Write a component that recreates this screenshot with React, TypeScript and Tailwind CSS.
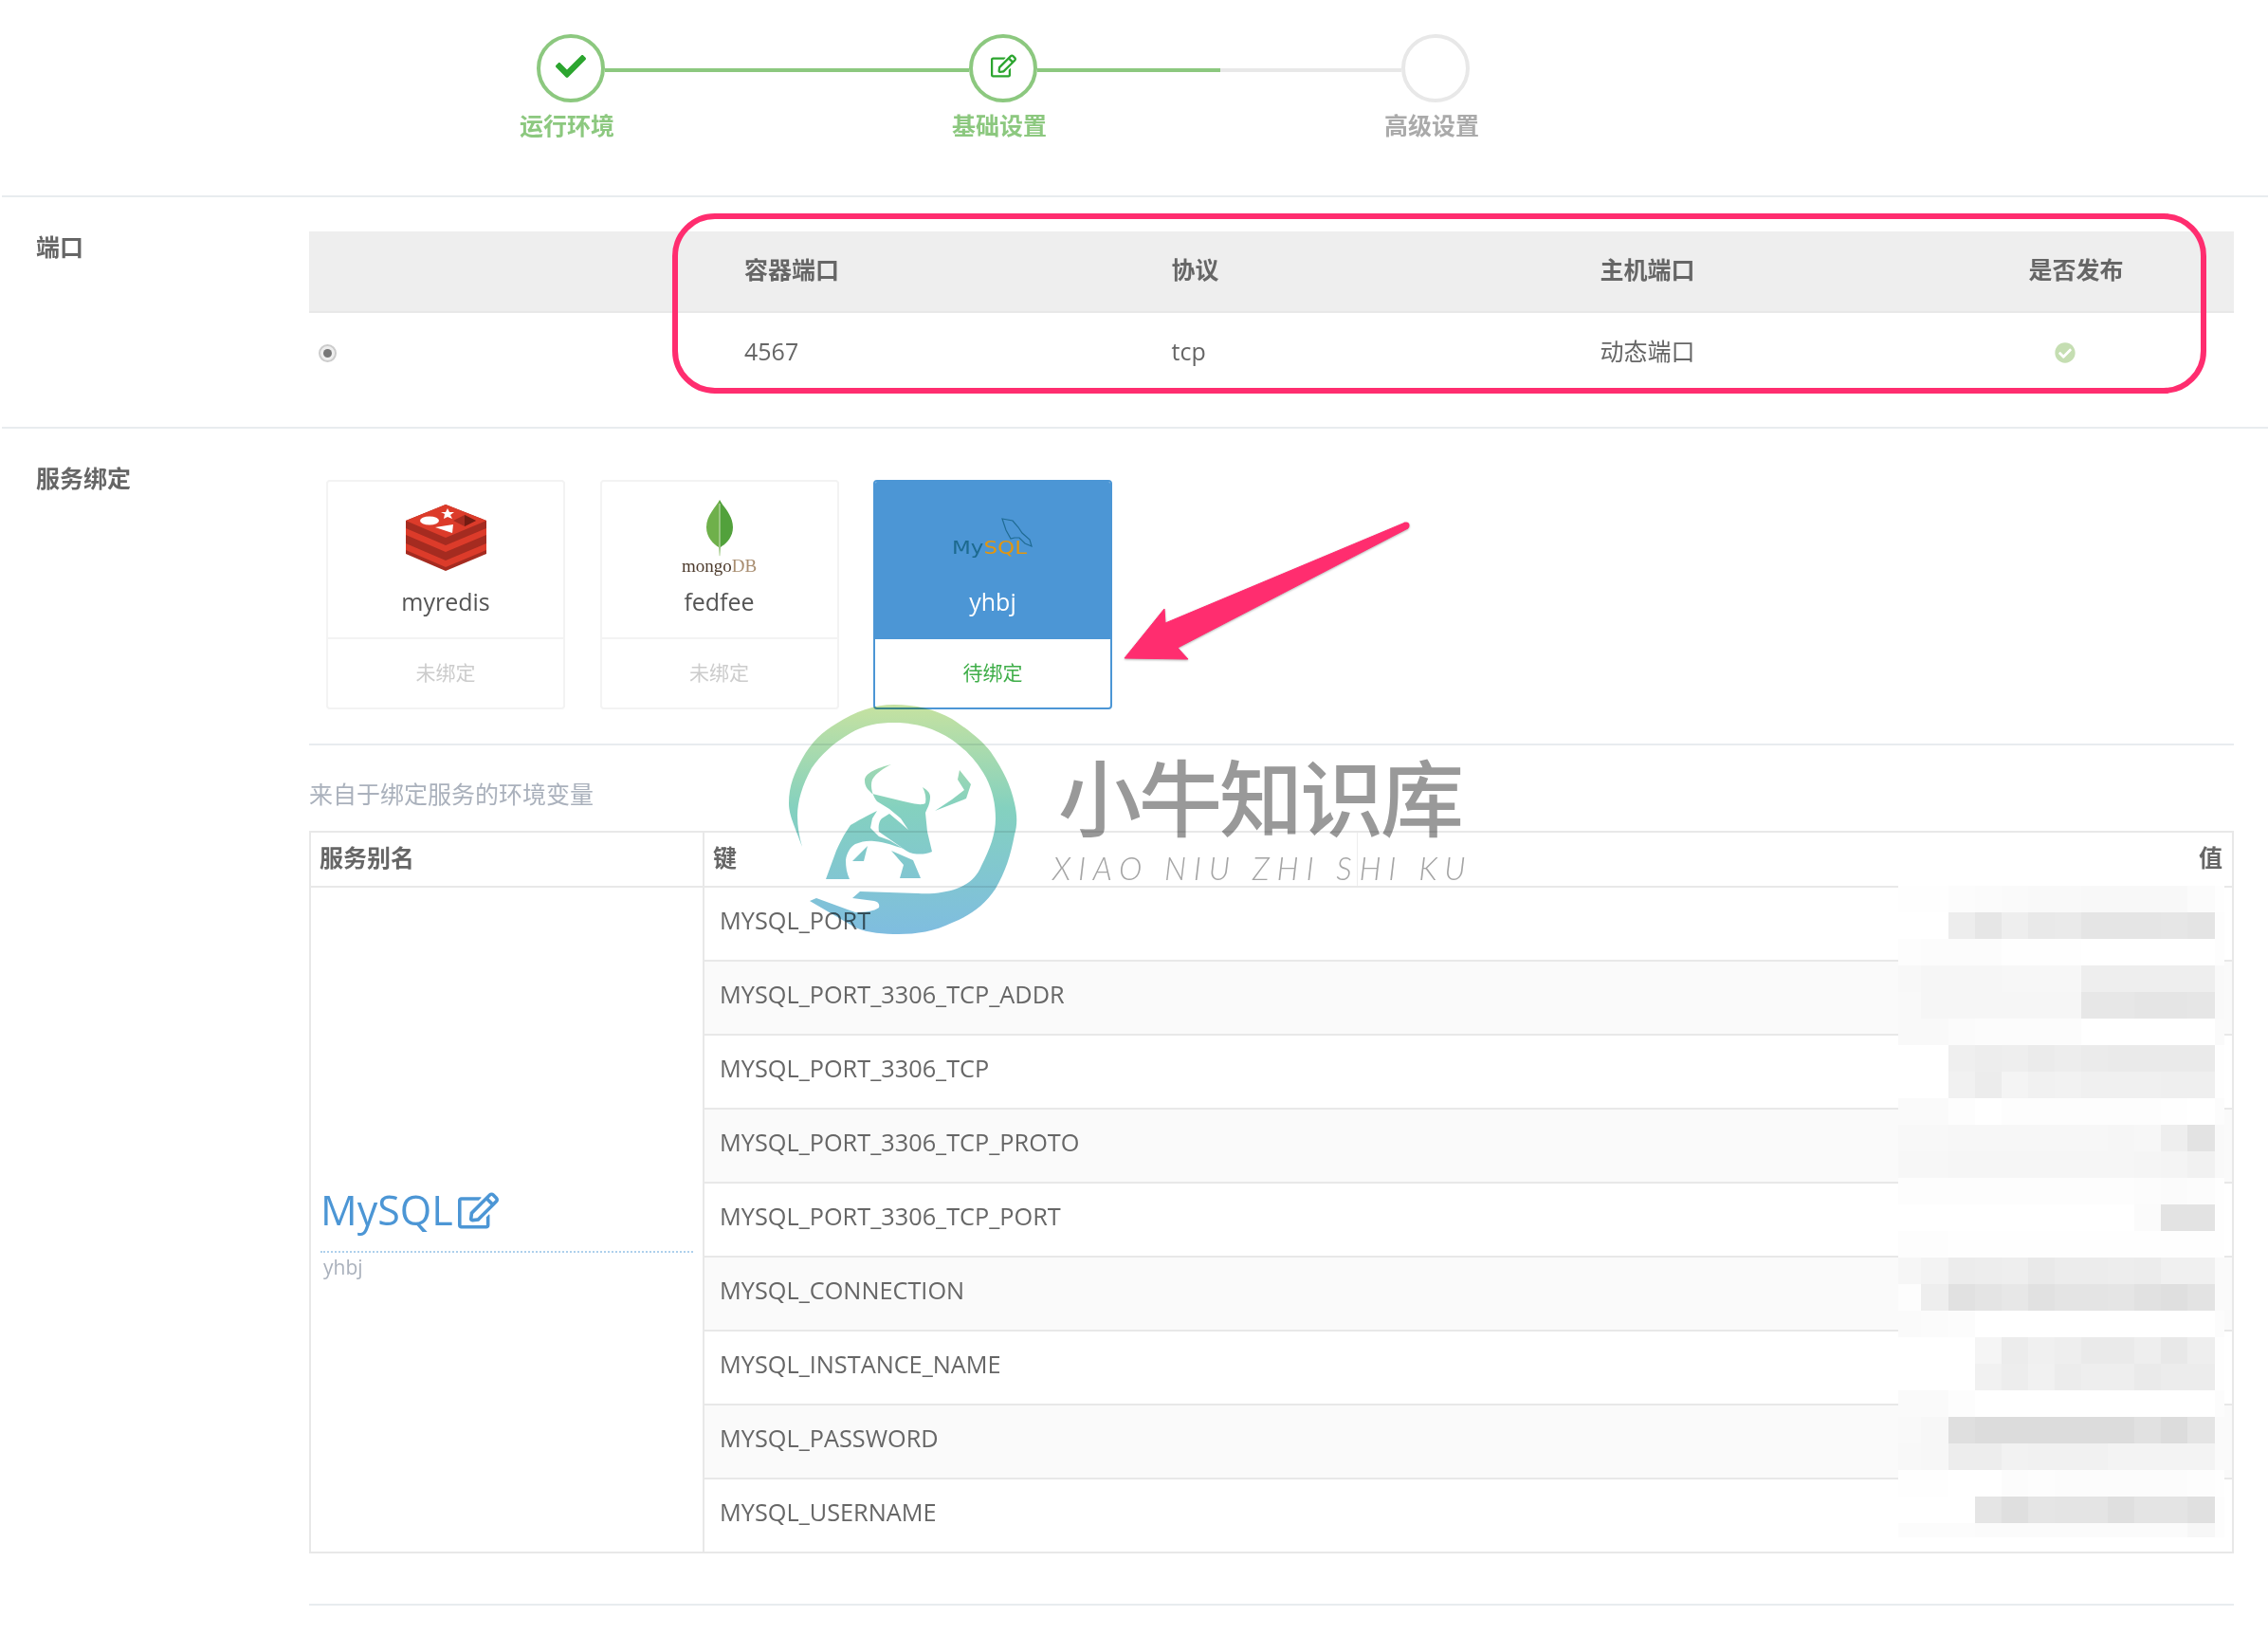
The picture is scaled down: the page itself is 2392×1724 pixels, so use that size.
import React from 'react';
import { FaCheck, FaCheckCircle, FaRegEdit } from 'react-icons/fa';

const envRows = [
  'MYSQL_PORT',
  'MYSQL_PORT_3306_TCP_ADDR',
  'MYSQL_PORT_3306_TCP',
  'MYSQL_PORT_3306_TCP_PROTO',
  'MYSQL_PORT_3306_TCP_PORT',
  'MYSQL_CONNECTION',
  'MYSQL_INSTANCE_NAME',
  'MYSQL_PASSWORD',
  'MYSQL_USERNAME',
];

// blurred values column, one line per mosaic row (grey level of each block)
const mosaic = [
  'fe fe fc fb fa f9 f9 f8 f8 f8 f8 fb fe',
  'ff ff ed e6 ee e9 ea e5 e5 e5 e6 e4 fd',
  'fd fc fc fc fe fe fe ff ff ff ff ff fd',
  'f8 f6 f6 f6 f7 f7 f7 ee ee ee ee ee f9',
  'f9 f6 f6 f6 f6 f6 f6 e7 e7 e5 e5 e6 f9',
  'f9 f9 fb fc fc fc fc ff ff ff ff ff fa',
  'ff ff ef ed ee eb ed eb ea ea ea ea fe',
  'ff ff f1 ec f4 f1 f2 f0 f0 f0 ef ef fe',
  'fa fa fd ff fd fd fd fd fd fd fe ff fc',
  'f8 f8 f7 f7 f7 f7 f7 f7 f6 f7 ee e3 f9',
  'f7 f7 f6 f6 f6 f6 f6 f6 f6 f5 f4 f1 f9',
  'fd fd fd fd fd fd fd fd fd fc fb fc fe',
  'ff ff ff ff ff ff ff ff ff fb e3 e3 fe',
  'fd fd fe fe fe fe fe fe fe fe fe fe fe',
  'f6 f3 ec ed ee e9 ec ec ed ec f0 f0 fa',
  'fd ee e1 e4 e7 e1 e4 e4 e5 e1 df e3 fa',
  'fa fb fc ff ff ff ff ff ff ff ff ff fc',
  'ff ff ff f5 ec f0 ee ea ea ee e8 ee fe',
  'ff ff ff f1 ed f1 ec ee ee ea ec ec fe',
  'fa fa fd ff ff ff ff ff ff ff ff ff fc',
  'f9 f7 df dc dc dc dc dc dc e1 dc e4 fa',
  'f8 f7 ed ed f2 f1 f1 f1 f3 f3 f3 f3 fa',
  'fe fe ff ff fc fd fc fc fc fc fc fd fe',
  'ff ff ff e5 df e5 e4 e4 df e4 e4 e0 fd',
  'fc fc fc fb fb fb fb fb fb fb fb f7 fd',
];

function Mosaic() {
  const xs = [0, 24, 52.6, 80.6, 108.6, 136.6, 165, 193, 221, 249, 277, 305, 333.6, 344];
  return (
    <svg className="absolute left-[1674px] top-[56px]" width="344" height="687" viewBox="0 0 344 687" shapeRendering="crispEdges">
      {mosaic.map((row, y) =>
        row.split(' ').map((v, x) => (
          <rect key={`${y}-${x}`} x={xs[x]} y={y * 28} width={xs[x + 1] - xs[x]} height={y === 24 ? 15 : 28} fill={`#${v}${v}${v}`} />
        ))
      )}
    </svg>
  );
}

function RedisLogo() {
  return (
    <svg width="85" height="70" viewBox="0 0 85 70">
      <path d="M42 0 85 17V52L42 70 0 52V17Z" fill="#a52b20" />
      <path d="M0 41 42 59 85 41V48L42 66 0 48Z" fill="#dc3b2a" />
      <path d="M0 25 42 43 85 25V32L42 50 0 32Z" fill="#dc3b2a" />
      <path d="M42 0 85 17 42 35 0 17Z" fill="#dc3b2a" />
      <ellipse cx="25" cy="17" rx="10" ry="4.5" fill="#fff" />
      <path d="M44 4 46 8 51 8 47 11 49 15 44 13 40 15 41 10 37 8 42 8Z" fill="#fff" />
      <path d="M31 24 50 21 49 30Z" fill="#fff" />
      <path d="M50 17 62 11 74 17 62 23Z" fill="#a52b20" />
      <path d="M62 11 74 17 62 23Z" fill="#741c13" />
    </svg>
  );
}

function MongoLogo() {
  return (
    <div className="flex flex-col items-center">
      <svg width="30" height="60" viewBox="0 0 30 60">
        <path d="M15 0C11 8 1 16 1 29 1 40 9 47 14 50L15 60Z" fill="#6fb04b" />
        <path d="M15 0C19 8 29 16 29 29 29 40 21 47 16 50L15 60Z" fill="#52a13c" />
        <path d="M15 4V59" stroke="#cfe3bd" strokeWidth="1" />
      </svg>
      <div className="font-['Liberation_Serif',serif] text-[19px] leading-[20px] h-[20px] text-[#4d3b2d]">
        mongo<span className="text-[#a88d70]">DB</span>
      </div>
    </div>
  );
}

function MysqlLogo() {
  return (
    <svg className="mt-[2px]" width="86" height="44" viewBox="0 0 86 44">
      <path d="M53 1 64 3 70 10 74 16 82 23 84 30 77 27 71 21 66 21 62 22 57 13Z" fill="none" stroke="#1f6b93" strokeWidth="1.2" />
      <text x="0" y="38" fontFamily="'DejaVu Sans', sans-serif" fontSize="19" textLength="79" lengthAdjust="spacingAndGlyphs">
        <tspan fill="#1d6a8f">My</tspan>
        <tspan fill="#e2960e">SQL</tspan>
      </text>
    </svg>
  );
}

function ServiceCard({ name, status, active, children }: { name: string; status: string; active?: boolean; children: React.ReactNode }) {
  return (
    <div className={active ? 'w-[252px] h-[242px] rounded border-2 border-[#4c96d5] bg-white overflow-hidden' : 'w-[252px] h-[242px] rounded border-2 border-[#f3f3f3] bg-white overflow-hidden'}>
      <div className={active ? 'h-[166px] bg-[#4c96d5] text-white' : 'h-[166px] border-b-2 border-[#f3f3f3] text-[#555]'}>
        <div className="h-[118px] flex items-center justify-center">{children}</div>
        <div className="h-[36px] -mt-[10px] leading-[36px] text-center text-[25px]">{name}</div>
      </div>
      <div className="h-[74px] leading-[71px] text-center text-[21px]">
        <span className={active ? 'text-[#3fae49]' : 'text-[#ccc]'}>{status}</span>
      </div>
    </div>
  );
}

function Watermark() {
  return (
    <div className="absolute left-[820px] top-[735px] w-[760px] h-[260px] mix-blend-multiply">
      <svg className="absolute left-0 top-0" width="260" height="260" viewBox="820 735 260 260">
        <defs>
          <linearGradient id="wm" gradientUnits="userSpaceOnUse" x1="0" y1="743" x2="0" y2="985">
            <stop offset="0" stopColor="#c6e2a0" />
            <stop offset="0.45" stopColor="#84d1bf" />
            <stop offset="1" stopColor="#7fbde0" />
          </linearGradient>
        </defs>
        <g fill="url(#wm)">
          <path d="M846 893C838 870 832 860 832 847 832 828 838 815 846 800 856 782 868 771 882 763 902 750 922 743 943 743 966 743 986 748 1004 758 1022 770 1036 781 1045 793 1058 812 1066 828 1070 847 1073 860 1073 870 1070 880 1066 902 1060 920 1050 937 1038 955 1022 966 1004 973 986 982 966 985 948 985 932 985 916 984 902 978L854 950 861 947 902 962C912 962 922 961 927 957 928 953 926 951 922 950L899 947 907 940 968 942C984 943 998 941 1009 937 1022 932 1030 925 1035 913 1044 895 1050 880 1050 863 1050 848 1047 834 1040 820 1030 802 1018 790 1004 780 986 768 966 762 943 762 926 762 910 765 897 773 878 784 866 796 856 810 846 828 841 845 841 860 841 872 843 882 846 893Z" />
          <path d="M940 806C925 810 912 815 912 823 912 830 916 833 920 837L953 845 962 847C968 848 972 849 976 847 977 841 976 836 973 830 978 833 981 836 981 840 981 848 978 852 976 857L978 877 983 898C976 901 970 901 963 900 958 899 954 896 950 893L927 877C926 871 927 866 930 863L938 858 950 868 958 875 950 863 938 853 925 845C921 840 917 830 920 822 924 815 932 810 940 806Z" />
          <path d="M925 855C914 860 904 866 897 870 890 880 886 888 882 897L871 927H896C893 921 892 914 892 907 893 899 897 893 902 890 909 887 916 886 922 887 934 888 944 892 953 895L938 886 927 882 918 873 920 863Z" />
          <path d="M1012 812 1024 827 1019 842 986 855 1004 843 1017 833 1010 822Z" />
          <path d="M915 892 899 908H911Z" />
          <path d="M940 897 963 907 971 926H949L953 912Z" />
        </g>
      </svg>
      <div className="absolute left-[296px] top-[46px] text-[88px] leading-[120px] font-medium text-[#999] tracking-[-3px] whitespace-nowrap">小牛知识库</div>
      <div className="absolute left-[290px] top-[158px] text-[33px] leading-[44px] font-light italic text-[#a5a5a5] tracking-[7.7px] whitespace-nowrap font-['Lato',sans-serif]">XIAO NIU ZHI SHI KU</div>
    </div>
  );
}

const portCols = ['容器端口', '协议', '主机端口', '是否发布'];

export default function App() {
  return (
    <div className="relative w-[2392px] h-[1724px] overflow-hidden bg-white text-[#666] font-['Open_Sans','Noto_Sans_CJK_SC',sans-serif]">
      {/* steps */}
      <div className="h-[206px] pt-[36px]">
        <div className="flex items-center pl-[566px]">
          <div className="w-[72px] h-[72px] pb-[5px] rounded-full border-4 border-[#8cc87f] flex items-center justify-center text-[#2ca52f]">
            <FaCheck size={32} />
          </div>
          <div className="w-[384px] h-[4px] mt-[4px] bg-[#8cc87f]" />
          <div className="w-[72px] h-[72px] pb-[5px] rounded-full border-4 border-[#8cc87f] flex items-center justify-center text-[#2ca52f]">
            <FaRegEdit size={27} />
          </div>
          <div className="w-[193px] h-[4px] mt-[4px] bg-[#8cc87f]" />
          <div className="w-[191px] h-[4px] mt-[4px] bg-[#e8e8e8]" />
          <div className="w-[72px] h-[72px] rounded-full border-4 border-[#e8e8e8]" />
        </div>
        <div className="flex pl-[370px] mt-[8px] text-[25px] leading-[32px] font-semibold text-center">
          <div className="w-[456px] text-[#8cc87f]">运行环境</div>
          <div className="w-[456px] text-[#8cc87f]">基础设置</div>
          <div className="w-[456px] text-[#aaa]">高级设置</div>
        </div>
      </div>

      {/* ports */}
      <div className="ml-[2px] h-[244px] border-t-2 border-[#e8ecef] flex">
        <div className="w-[324px] pl-[36px] pt-[36px] text-[25px] leading-[32px] font-semibold">端口</div>
        <div className="w-[2030px] pt-[36px]">
          <div className="h-[86px] pb-[3px] bg-[#eee] border-b-2 border-[#e8e8e8] grid grid-cols-[459px_450.5px_452px_452px_1fr] items-center text-[25px] font-semibold">
            <div />
            {portCols.map((c) => (
              <div key={c}>{c}</div>
            ))}
          </div>
          <div className="h-[84px] pb-[2px] grid grid-cols-[459px_450.5px_452px_452px_1fr] items-center text-[25px]">
            <div className="w-[19px] h-[19px] ml-[10px] mt-[2px] rounded-full bg-[#eee] border-2 border-[#ccc] flex items-center justify-center">
              <div className="w-[9px] h-[9px] rounded-full bg-[#777]" />
            </div>
            <div>4567</div>
            <div>tcp</div>
            <div>动态端口</div>
            <div className="pl-[27px] pt-[2px] text-[#c5deb2]"><FaCheckCircle size={22} /></div>
          </div>
        </div>
      </div>

      {/* service bindings */}
      <div className="ml-[2px] border-t-2 border-[#e8ecef] flex">
        <div className="w-[324px] pl-[36px] pt-[36px] text-[25px] leading-[32px] font-semibold">服务绑定</div>
        <div className="w-[2030px] pt-[54px]">
          <div className="flex gap-[36.5px] pl-[18px] pb-[36px] border-b-2 border-[#e8ecef]">
            <ServiceCard name="myredis" status="未绑定"><RedisLogo /></ServiceCard>
            <ServiceCard name="fedfee" status="未绑定"><MongoLogo /></ServiceCard>
            <ServiceCard name="yhbj" status="待绑定" active><MysqlLogo /></ServiceCard>
          </div>
          <div className="h-[90px] pt-[34px] text-[25px] leading-[34px] text-[#aab1bc]">来自于绑定服务的环境变量</div>

          <div className="relative border-2 border-[#e8e8e8]">
            <div className="h-[56px] pb-[3px] flex items-center text-[25px] font-semibold">
              <div className="w-[413px] pl-[9px]">服务别名</div>
              <div className="w-[690px] h-[56px] -mb-[3px] pb-[3px] border-l-2 border-[#e8e8e8] pl-[9px] flex items-center">键</div>
              <div className="flex-1 h-[56px] -mb-[3px] pb-[3px] border-l border-[#eee] pr-[10px] flex items-center justify-end">值</div>
            </div>
            <div className="flex">
              <div className="w-[413px] border-t-2 border-[#e8e8e8] flex flex-col justify-center pl-[10px] pr-[10px] pt-[33px]">
                <div className="flex items-center gap-[5px] h-[56px] pb-[10px] -mt-[2px] text-[#4c96d5] text-[43px] leading-[46px]">
                  MySQL<FaRegEdit size={43} />
                </div>
                <div className="border-b-2 border-dotted border-[#aed0ec] mt-[10px]" />
                <div className="text-[21px] leading-[28px] mt-[1px] pl-[3px] text-[#aab1bc]">yhbj</div>
              </div>
              <div className="flex-1 border-l-2 border-[#e8e8e8]">
                {envRows.map((k, i) => (
                  <div key={k} className={i % 2 === 1 ? 'h-[78px] pb-[7px] border-t-2 border-[#e8e8e8] bg-[#fafafa] pl-[16px] flex items-center text-[25.3px]' : 'h-[78px] pb-[7px] border-t-2 border-[#e8e8e8] pl-[16px] flex items-center text-[25.3px]'}>
                    {k}
                  </div>
                ))}
              </div>
            </div>
            <Mosaic />
          </div>
          <div className="mt-[53px] border-t-2 border-[#e8ecef]" />
        </div>
      </div>

      {/* annotations drawn over the screenshot */}
      <div className="absolute left-[709px] top-[225px] w-[1618px] h-[190px] rounded-[45px] border-[6px] border-[#ff2d6f]" />
      <svg className="absolute left-[1170px] top-[540px] drop-shadow-[0_1px_1px_rgba(0,0,0,0.3)]" width="330" height="170" viewBox="1170 540 330 170">
        <path d="M1482 551 1229 657 1228 642 1186 694 1253 695 1242 683 1485 557Z" fill="#ff2d6f" stroke="#ff2d6f" strokeWidth="1" strokeLinejoin="round" />
        <circle cx="1483" cy="554" r="3.5" fill="#ff2d6f" />
      </svg>
      <Watermark />
    </div>
  );
}
